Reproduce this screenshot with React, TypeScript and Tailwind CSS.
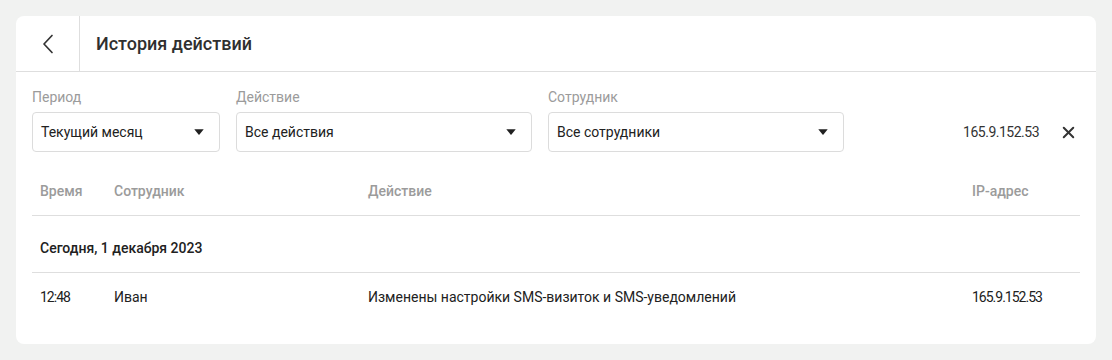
import { X } from 'lucide-react';

const font = { fontFamily: 'Roboto, "Noto Sans", sans-serif' };

interface SelectProps {
  label: string;
  value: string;
  width: string;
}

const Caret = () => (
  <svg width="10" height="6" viewBox="0 0 10 6" className="flex-shrink-0">
    <path d="M0.3 0.3h9.4L5.5 5.4a0.7 0.7 0 0 1-1 0z" fill="#212121" />
  </svg>
);

const Select = ({ label, value, width }: SelectProps) => (
  <div className={`flex flex-col gap-[7px] ${width}`}>
    <div className="text-[14px] leading-4 text-[#9b9b9b]">{label}</div>
    <div className="h-10 flex items-center justify-between pl-2 pr-[15px] rounded border border-[#dcdcdc] bg-white">
      <span className="text-[14px] text-[#212121]">{value}</span>
      <Caret />
    </div>
  </div>
);

export default function App() {
  return (
    <div className="min-h-[360px] bg-[#f1f2f1] p-4" style={font}>
      <div className="bg-white rounded-lg h-[328px] flex flex-col">
        <div className="h-14 flex border-b border-[#dedede]">
          <button className="w-16 flex items-center justify-center border-r border-[#dedede]">
            <svg width="12" height="20" viewBox="0 0 12 20" fill="none">
              <path d="M10 1.5L2 10l8 8.5" stroke="#333" strokeWidth="1.7" strokeLinecap="round" strokeLinejoin="round" />
            </svg>
          </button>
          <h1 className="pl-4 flex items-center text-[18px] font-medium text-[#2f2f2f]">История действий</h1>
        </div>

        <div className="px-4 pt-[17px]">
          <div className="flex items-end gap-4">
            <Select label="Период" value="Текущий месяц" width="w-[188px]" />
            <Select label="Действие" value="Все действия" width="w-[296px]" />
            <Select label="Сотрудник" value="Все сотрудники" width="w-[296px]" />
            <div className="flex-1 h-10 flex items-center justify-end gap-5 pr-[2px]">
              <span className="text-[14px] tracking-[-0.5px] text-[#333]">165.9.152.53</span>
              <X size={19} strokeWidth={2.5} className="text-[#333]" />
            </div>
          </div>

          <div className="mt-4 text-[14px]">
            <div className="h-12 flex items-center border-b border-[#dedede] text-[#9b9b9b] font-medium">
              <div className="w-[74px] pl-2">Время</div>
              <div className="w-[254px] pl-2">Сотрудник</div>
              <div className="w-[604px] pl-2">Действие</div>
              <div className="flex-1 pl-2">IP-адрес</div>
            </div>
            <div className="pt-6 pb-4 leading-4 border-b border-[#dedede] pl-2 font-medium text-[#212121]">
              Сегодня, 1 декабря 2023
            </div>
            <div className="h-12 flex items-center text-[#212121]">
              <div className="w-[74px] pl-2 tracking-[-1px]">12:48</div>
              <div className="w-[254px] pl-2">Иван</div>
              <div className="w-[604px] pl-2">Изменены настройки SMS-визиток и SMS-уведомлений</div>
              <div className="flex-1 pl-2 tracking-[-1px]">165.9.152.53</div>
            </div>
          </div>
        </div>
      </div>
    </div>
  );
}
